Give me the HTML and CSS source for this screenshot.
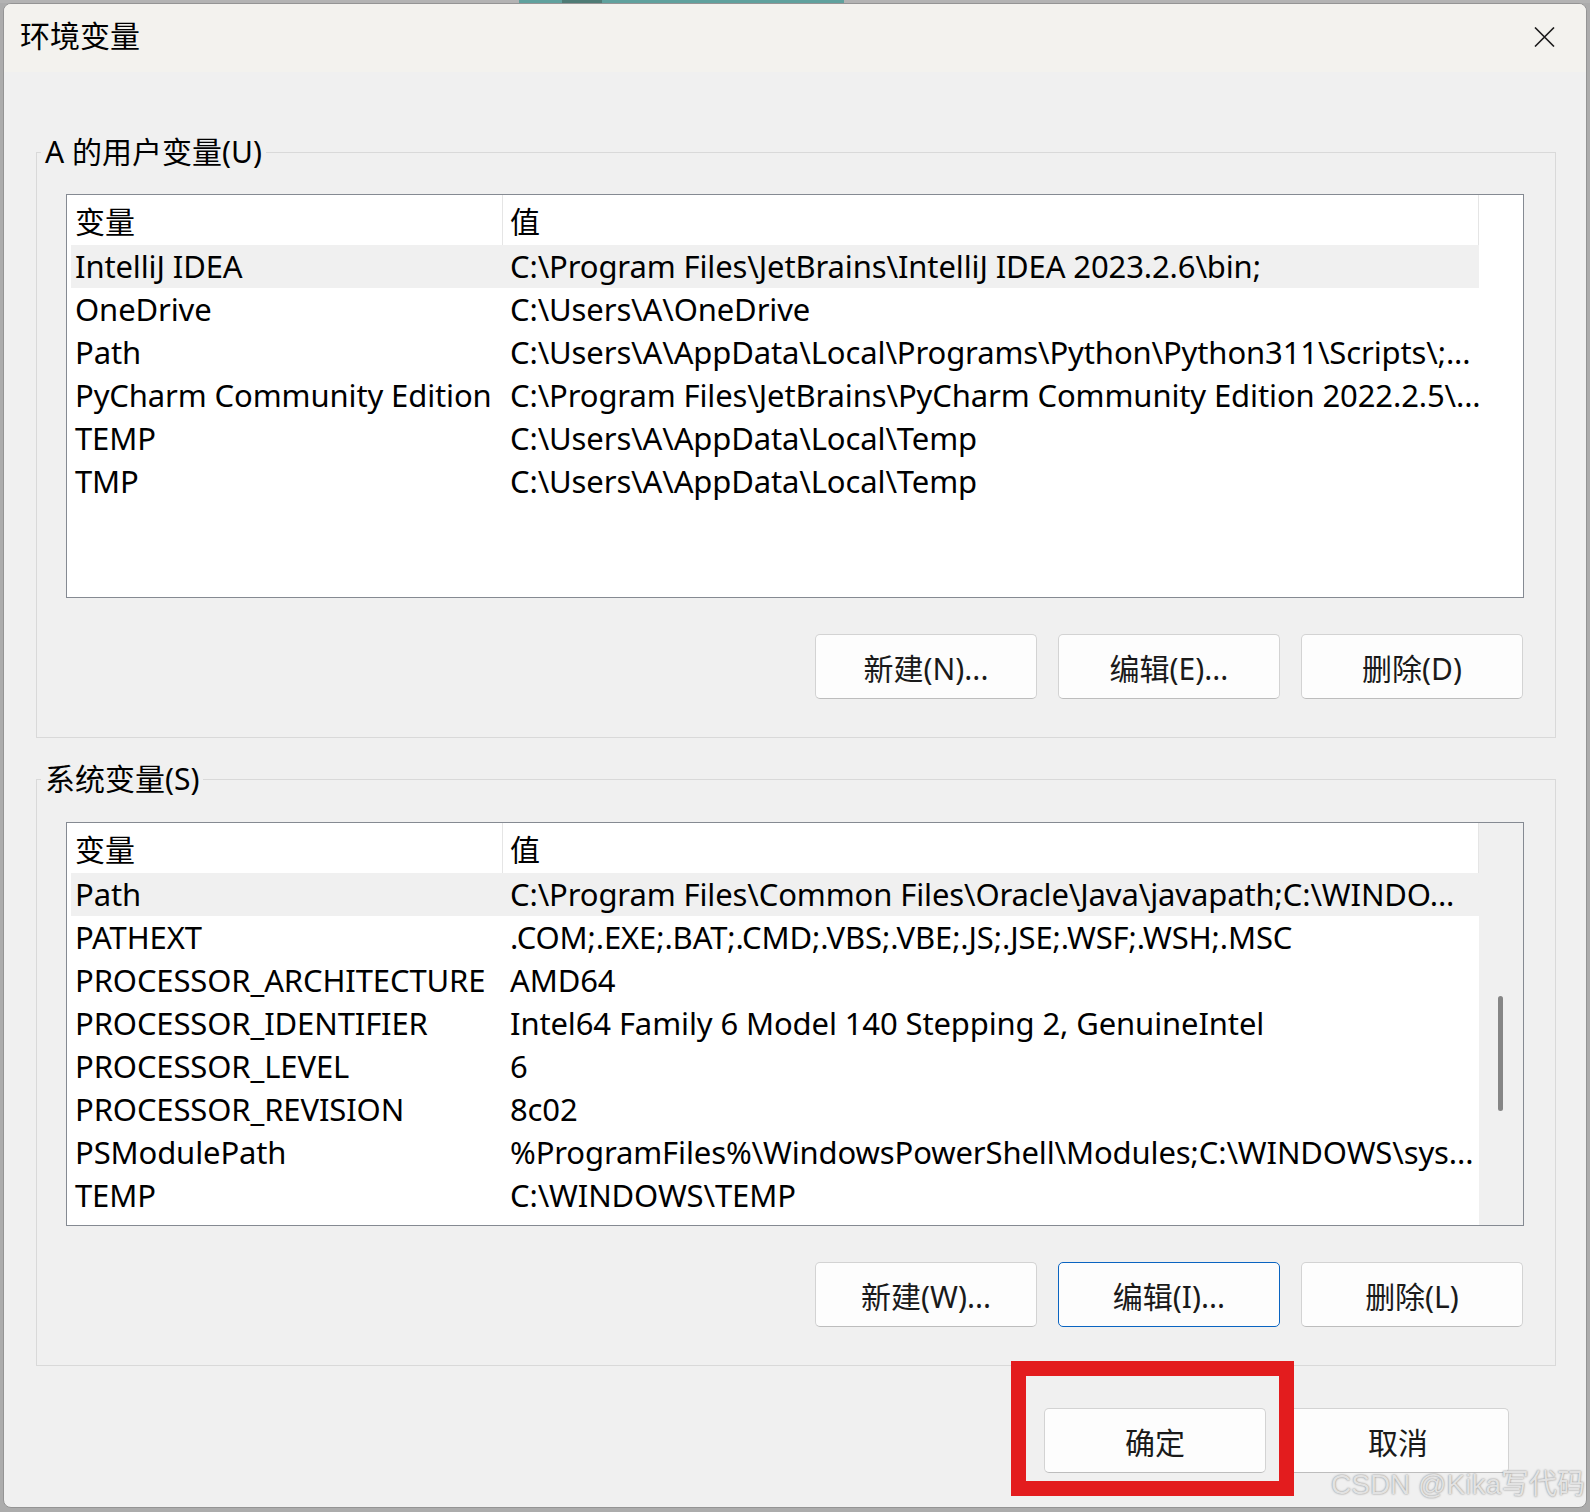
FILE: index.html
```html
<!DOCTYPE html>
<html lang="zh-CN">
<head>
    <meta charset="UTF-8">
    <title>环境变量</title>
    <link rel="stylesheet" href="styles.css">
</head>
<body>

    <div class="desk-strip"></div>

    <div class="window">
        <!-- barra de título -->
        <div class="titlebar">
            <span class="title">环境变量</span>
            <svg class="close" width="21" height="20" viewBox="0 0 21 20">
                <path d="M1 0.5 L20 19.5 M20 0.5 L1 19.5" stroke="#1b1b1b" stroke-width="1.6" fill="none"/>
            </svg>
        </div>

        <div class="content">
            <!-- variáveis do usuário -->
            <fieldset class="group">
                <legend>A 的用户变量(U)</legend>
                <div class="group-body">
                    <div class="listbox">
                        <div class="list">
                            <div class="row head"><span>变量</span><span>值</span></div>
                            <div class="row sel"><span>IntelliJ IDEA</span><span>C:\Program Files\JetBrains\IntelliJ IDEA 2023.2.6\bin;</span></div>
                            <div class="row"><span>OneDrive</span><span>C:\Users\A\OneDrive</span></div>
                            <div class="row"><span>Path</span><span>C:\Users\A\AppData\Local\Programs\Python\Python311\Scripts\;...</span></div>
                            <div class="row"><span>PyCharm Community Edition</span><span>C:\Program Files\JetBrains\PyCharm Community Edition 2022.2.5\...</span></div>
                            <div class="row"><span>TEMP</span><span>C:\Users\A\AppData\Local\Temp</span></div>
                            <div class="row"><span>TMP</span><span>C:\Users\A\AppData\Local\Temp</span></div>
                        </div>
                        <div class="side"></div>
                    </div>
                    <div class="btns">
                        <button class="btn">新建(N)...</button>
                        <button class="btn">编辑(E)...</button>
                        <button class="btn">删除(D)</button>
                    </div>
                </div>
            </fieldset>

            <!-- variáveis do sistema -->
            <fieldset class="group group2">
                <legend>系统变量(S)</legend>
                <div class="group-body">
                    <div class="listbox">
                        <div class="list">
                            <div class="row head"><span>变量</span><span>值</span></div>
                            <div class="row sel"><span>Path</span><span>C:\Program Files\Common Files\Oracle\Java\javapath;C:\WINDO...</span></div>
                            <div class="row"><span>PATHEXT</span><span>.COM;.EXE;.BAT;.CMD;.VBS;.VBE;.JS;.JSE;.WSF;.WSH;.MSC</span></div>
                            <div class="row"><span>PROCESSOR_ARCHITECTURE</span><span>AMD64</span></div>
                            <div class="row"><span>PROCESSOR_IDENTIFIER</span><span>Intel64 Family 6 Model 140 Stepping 2, GenuineIntel</span></div>
                            <div class="row"><span>PROCESSOR_LEVEL</span><span>6</span></div>
                            <div class="row"><span>PROCESSOR_REVISION</span><span>8c02</span></div>
                            <div class="row"><span>PSModulePath</span><span>%ProgramFiles%\WindowsPowerShell\Modules;C:\WINDOWS\sys...</span></div>
                            <div class="row"><span>TEMP</span><span>C:\WINDOWS\TEMP</span></div>
                        </div>
                        <div class="side scroll"><div class="thumb"></div></div>
                    </div>
                    <div class="btns">
                        <button class="btn">新建(W)...</button>
                        <button class="btn focus">编辑(I)...</button>
                        <button class="btn">删除(L)</button>
                    </div>
                </div>
            </fieldset>

            <div class="footer">
                <span class="mark">
                    <button class="btn">确定</button>
                    <span class="redbox"></span>
                </span>
                <button class="btn">取消</button>
            </div>
        </div>

        <div class="watermark">CSDN @Kika写代码</div>
    </div>

</body>
</html>
```

FILE: styles.css
```css
html, body {
    margin: 0;
    height: 1512px;
    overflow: hidden;
}
body {
    background-color: #acacac;
    font-family: "Noto Sans", "Noto Sans CJK SC", sans-serif;
    color: #000;
}
.desk-strip {
    height: 3px;
    background: linear-gradient(to right, #b3b3b3 0 519px, #5fa19d 519px 562px, #4e7b75 562px 602px, #5fa19d 602px 844px, #b3b3b3 844px);
}
.window {
    position: relative;
    box-sizing: border-box;
    width: 1584px;
    height: 1505px;
    margin-left: 3px;
    border: 1px solid #949494;
    border-radius: 8px;
    background-color: #f0f0f0;
    overflow: hidden;
}
.titlebar {
    height: 68px;
    background-color: #f3f2ee;
    display: flex;
    align-items: center;
    justify-content: space-between;
    padding: 0 31px 4px 16px;
    box-sizing: border-box;
}
.title {
    font-size: 30px;
    line-height: 34px;
}
.close {
    display: block;
    margin-top: 2px;
}
.content {
    padding-top: 63px;
}
.group {
    margin: 0 30px 0 32px;
    padding: 0;
    border: 1px solid #d9d9d9;
}
.group2 {
    margin-top: 24px;
}
.group legend {
    margin-left: 4px;
    padding: 0 4px;
    font-size: 30px;
    line-height: 34px;
}
.group-body {
    padding: 25px 31px 38px 29px;
}
.group2 .group-body {
    padding-top: 26px;
}
.listbox {
    box-sizing: border-box;
    height: 404px;
    border: 1px solid #858a92;
    background-color: #fff;
    display: flex;
}
.list {
    width: 1412px;
    flex: none;
}
.side {
    flex: 1;
}
.side.scroll {
    background-color: #f0f0f0;
    position: relative;
}
.thumb {
    position: absolute;
    left: 19px;
    top: 173px;
    width: 5px;
    height: 115px;
    border-radius: 3px;
    background-color: #868686;
}
.row {
    display: grid;
    grid-template-columns: 432px 1fr;
    margin-left: 4px;
    height: 43px;
    line-height: 43px;
    font-size: 31px;
    letter-spacing: -0.12px;
    white-space: nowrap;
}
.row span {
    padding-left: 4px;
}
.row span + span {
    padding-left: 7px;
}
.row.head {
    box-sizing: border-box;
    height: 50px;
    line-height: 47px;
    padding-top: 3px;
    font-size: 30px;
    letter-spacing: 0;
    border-right: 1px solid #e5e5e5;
}
.row.head span:first-child {
    border-right: 1px solid #e5e5e5;
    margin-top: -3px;
    padding-top: 3px;
}
.row.sel {
    background-color: #f0f0f0;
}
.btns {
    display: flex;
    justify-content: flex-end;
    gap: 21px;
    margin-top: 36px;
    padding-right: 1px;
}
.btn {
    box-sizing: border-box;
    width: 222px;
    height: 65px;
    border: 1px solid #d3d3d3;
    border-bottom-color: #bdbdbd;
    border-radius: 5px;
    background-color: #fdfdfd;
    font-family: "Noto Sans", "Noto Sans CJK SC", sans-serif;
    font-size: 30px;
    color: #1a1a1a;
    padding: 0;
}
.btn.focus {
    border: 1px solid #0a64c1;
}
.footer {
    display: flex;
    justify-content: flex-end;
    gap: 21px;
    margin: 42px 77px 0 0;
}
.mark {
    position: relative;
    display: block;
}
.mark .btn {
    display: block;
}
.redbox {
    position: absolute;
    top: -47px;
    left: -33px;
    width: 283px;
    height: 135px;
    box-sizing: border-box;
    border: 15px solid #e31c1e;
}
.watermark {
    position: absolute;
    right: 1px;
    bottom: 8px;
    font-family: "Liberation Sans", "Noto Sans CJK SC", sans-serif;
    font-size: 28px;
    line-height: 28px;
    color: #e2e2e2;
    text-shadow: 0 0 2px #7a7a7a;
    white-space: nowrap;
}
```
